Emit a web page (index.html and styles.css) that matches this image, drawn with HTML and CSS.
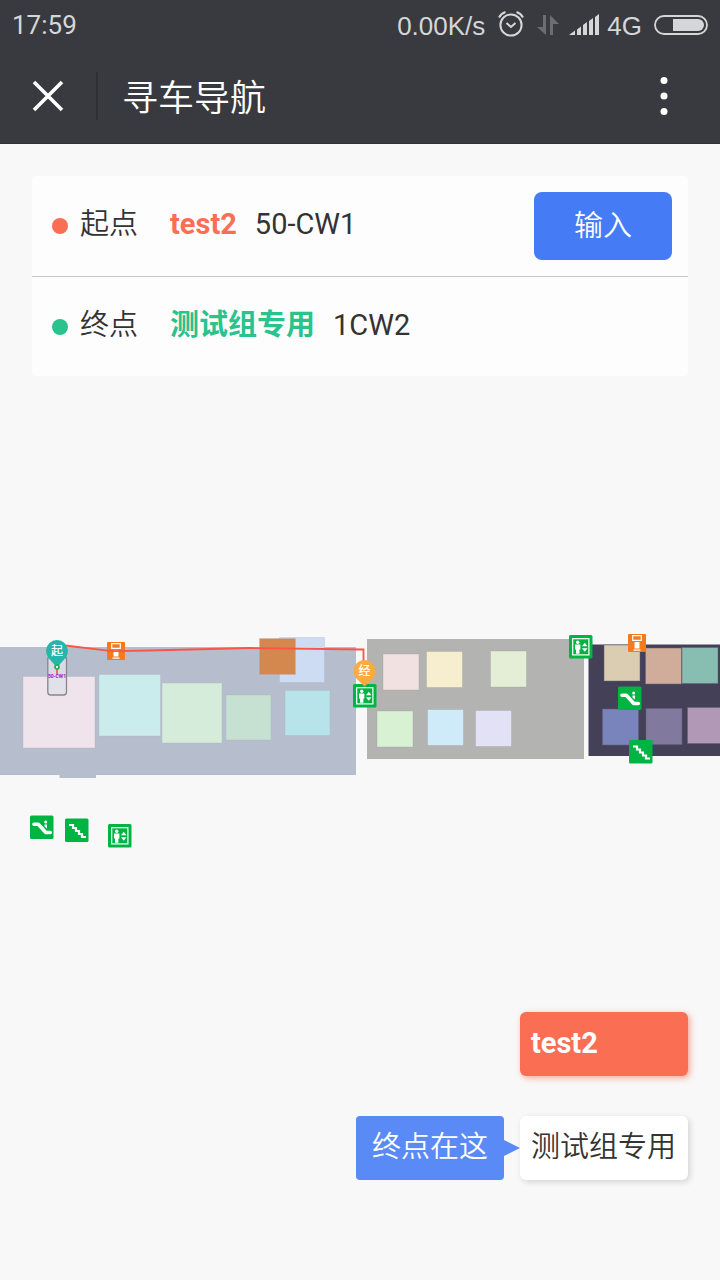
FILE: index.html
```html
<!DOCTYPE html>
<html lang="zh-CN">
<head>
<meta charset="utf-8">
<meta name="viewport" content="width=device-width, initial-scale=1">
<title>寻车导航</title>
<link rel="stylesheet" href="styles.css">
</head>
<body>
<div class="app">
  <header class="header">
    <div class="status">
      <span class="status-time">17:59</span>
      <span class="status-net">0.00K/s</span>
      <svg class="icon-alarm" width="28" height="28" viewBox="0 0 28 28" fill="none" stroke="#d5d6d7" stroke-width="2">
        <circle cx="14" cy="14" r="10.600"/>
        <path d="M9.500 12l4.500 4 4.500-4M2 6.500Q4 2.500 8.500 1M26 6.500Q24 2.500 19.500 1"/>
      </svg>
      <svg class="icon-data" width="22" height="22" viewBox="0 0 22 22" fill="#6c6d71">
        <path d="M6 1h3v20L0 13h6zM13 21h3v-11h6L13 1z"/>
      </svg>
      <svg class="icon-signal" width="30" height="22" viewBox="0 0 30 22" fill="#d5d6d7">
        <path d="M0 21L6 16.500V21zM8 15.500l4-3V21H8zM14 11l4-3v13h-4zM20 7l4-3v17h-4zM26 3l4-3v21h-4z"/>
      </svg>
      <span class="status-cell">4G</span>
      <svg class="icon-battery" width="54" height="20" viewBox="0 0 54 20">
        <rect x="1" y="1" width="52" height="18" rx="9" fill="none" stroke="#d5d6d7" stroke-width="1.800"/>
        <path d="M19 4h25a6 6 0 0 1 0 12H19z" fill="#d5d6d7"/>
      </svg>
    </div>
    <div class="titlebar">
      <button class="icon-button" type="button" aria-label="关闭">
        <svg width="32" height="32" viewBox="0 0 32 32" stroke="#fff" stroke-width="3.600"><path d="M2 2l28 28M30 2L2 30"/></svg>
      </button>
      <h1 class="title">寻车导航</h1>
      <button class="icon-button" type="button" aria-label="更多">
        <svg width="8" height="40" viewBox="0 0 8 40" fill="#fff"><circle cx="4" cy="4.500" r="3.500"/><circle cx="4" cy="20" r="3.500"/><circle cx="4" cy="35.500" r="3.500"/></svg>
      </button>
    </div>
  </header>

  <main class="main">
    <section class="route">
      <div class="route-row">
        <span class="dot dot-start"></span>
        <span class="route-text">
          <span class="route-label">起点</span>
          <strong class="place place-start">test2</strong>
          <span class="spot">50-CW1</span>
        </span>
        <button class="enter" type="button">输入</button>
      </div>
      <div class="route-row">
        <span class="dot dot-end"></span>
        <span class="route-text">
          <span class="route-label">终点</span>
          <strong class="place place-end">测试组专用</strong>
          <span class="spot">1CW2</span>
        </span>
      </div>
    </section>

    <svg class="map" viewBox="0 620 720 240" role="img" aria-label="楼层地图">
      <defs>
        <g id="lift">
          <rect width="23.500" height="23.500" rx="1.500" fill="#00b444"/>
          <rect x="3.700" y="3.700" width="16.200" height="16.200" fill="none" stroke="#fff" stroke-width="1.200"/>
          <circle cx="8.700" cy="7.300" r="1.700" fill="#fff"/>
          <path d="M6 9.500h5.400v5h-1v4.200H7v-4.200H6zM13 11.300h5.500L15.750 7.800zM13 13.300h5.500l-2.750 3.500z" fill="#fff"/>
        </g>
        <g id="escalator">
          <rect width="23.500" height="23.500" rx="1.500" fill="#00b444"/>
          <path d="M4 8.800h4.300l7.500 8.200h4.500" fill="none" stroke="#fff" stroke-width="3.600" stroke-linecap="round" stroke-linejoin="round"/>
          <circle cx="15.700" cy="6.500" r="1.500" fill="#fff"/>
          <path d="M14.500 9h2.500v4l-2.500-2z" fill="#fff"/>
        </g>
        <g id="stairs">
          <rect width="23.500" height="23.500" rx="1.500" fill="#00b444"/>
          <path d="M4 6.500h4v3h3v3h3v3h3v3h4" fill="none" stroke="#fff" stroke-width="2.200"/>
        </g>
        <g id="gate">
          <rect width="18" height="18" rx="1" fill="#f47a1c"/>
          <path d="M4.700 1.700h8.600v4.600H4.700z" fill="none" stroke="#fff" stroke-width="1.200"/>
          <path d="M6.500 8h5v6.500h-5zM5.500 15.500h7v1.200h-7z" fill="#fff"/>
        </g>
      </defs>

      <path d="M-1 647H356V775H96V778H59.500V775H-1z" fill="#b6bdcc"/>
      <g stroke="#b0b5bf" stroke-opacity=".35">
        <rect x="23" y="676.500" width="72" height="71.500" fill="#efe4ec"/>
        <rect x="99" y="674.500" width="61.500" height="61.500" fill="#caecec"/>
        <rect x="162" y="683" width="60" height="60" fill="#d4ecd9"/>
        <rect x="226" y="695" width="45" height="45" fill="#c6e1d1"/>
        <rect x="285" y="690.500" width="45" height="45" fill="#b7e3ea"/>
        <rect x="279.500" y="637.500" width="45" height="45" fill="#cedcf3"/>
        <rect x="259.500" y="638.500" width="36" height="36" fill="#d4884d"/>
      </g>

      <rect x="367" y="639" width="217" height="120" fill="#b3b3b1"/>
      <g stroke="#999" stroke-opacity=".3">
        <rect x="383" y="654" width="36" height="36" fill="#f2e1e1"/>
        <rect x="426.500" y="651.500" width="36" height="36" fill="#f7eecf"/>
        <rect x="490.500" y="651" width="36" height="36" fill="#e4edd6"/>
        <rect x="377" y="711" width="36" height="36" fill="#d8f1d3"/>
        <rect x="427.500" y="709.500" width="36" height="36" fill="#cfeaf9"/>
        <rect x="475.500" y="710.500" width="36" height="36" fill="#e3e1f6"/>
      </g>

      <rect x="588.500" y="644.500" width="140" height="111.500" fill="#434058"/>
      <g stroke="#655f72" stroke-opacity=".5">
        <rect x="604" y="645" width="36" height="36" fill="#dbcdb2"/>
        <rect x="645.500" y="648" width="36" height="36" fill="#d0ad9b"/>
        <rect x="682" y="647.500" width="36" height="36" fill="#88bdb2"/>
        <rect x="602.500" y="709" width="36" height="36" fill="#7983bc"/>
        <rect x="646" y="708.500" width="36" height="36" fill="#82799f"/>
        <rect x="687.500" y="707.500" width="36" height="36" fill="#b098b6"/>
      </g>

      <use href="#gate" x="107" y="642"/>
      <use href="#gate" x="628" y="634"/>
      <path d="M65 645.500L112 651.200 150 650.500 250 648 363.500 649.500V662" fill="none" stroke="#fb5448" stroke-width="1.800"/>

      <rect x="47.800" y="656" width="18.700" height="39" rx="3" fill="#dde1e9" fill-opacity=".85" stroke="#8c8489" stroke-width="1.300"/>
      <path d="M57 668v7" stroke="#f35d4e" stroke-width="1.800"/>
      <path d="M57 667.500L48.500 658A11 11 0 1 1 65.500 658z" fill="#25b5aa"/>
      <circle cx="57" cy="667" r="2" fill="#fff" stroke="#17ad46" stroke-width="1.600"/>
      <text class="pin-text" x="57" y="655">起</text>
      <text class="spot-text" x="57" y="678">50-CW1</text>

      <use href="#lift" x="353" y="684"/>
      <use href="#lift" x="569" y="635"/>
      <use href="#lift" x="108" y="824"/>
      <use href="#escalator" x="30" y="815.500"/>
      <use href="#escalator" x="618" y="686.500"/>
      <use href="#stairs" x="65" y="818.500"/>
      <use href="#stairs" x="629" y="740"/>

      <path d="M364.500 686.500L356 678A11 11 0 1 1 373 678z" fill="#ffaa3c"/>
      <text class="pin-text" x="364.500" y="675">经</text>
    </svg>

    <nav class="floors" aria-label="楼层">
      <button class="floor floor-active" type="button">test2</button>
      <div class="floor-line">
        <span class="hint">终点在这</span>
        <button class="floor floor-cjk" type="button">测试组专用</button>
      </div>
    </nav>
  </main>
</div>
</body>
</html>
```

FILE: styles.css
```css
* {
  box-sizing: border-box;
}

body {
  margin: 0;
  background: #f8f8f8;
  color: #333;
  font-family: Roboto, "Noto Sans CJK SC", sans-serif;
  font-size: 29px;
  line-height: 40px;
}

button {
  margin: 0;
  padding: 0;
  border: 0;
  background: none;
  color: inherit;
  font: inherit;
  cursor: pointer;
}

svg {
  display: block;
  flex: none;
}

.app {
  display: flex;
  flex-direction: column;
  min-height: 100vh;
}

.header {
  background: #393a3f;
  border-bottom: 1px solid #323338;
  color: #fff;
}

.status {
  display: flex;
  align-items: center;
  height: 48px;
  padding: 2px 12px 0;
  color: #d5d6d7;
  font-size: 26px;
}

.status-time {
  margin-right: auto;
}

.status-net,
.status-cell {
  font-family: "Liberation Sans", sans-serif;
  padding-top: 2px;
}

.icon-alarm,
.icon-data {
  margin-left: 12px;
}

.icon-signal {
  margin-left: 10px;
}

.status-cell {
  margin-left: 8px;
}

.icon-battery {
  margin-left: 12px;
}

.titlebar {
  display: flex;
  align-items: center;
  height: 95px;
  padding: 1px 16px 0 0;
}

.icon-button {
  display: flex;
  flex: none;
  align-items: center;
  justify-content: center;
  width: 80px;
  height: 80px;
}

.icon-button:first-child {
  width: 96px;
}

.title {
  flex: 1;
  margin: 0;
  padding: 6px 0 0 24px;
  border-left: 2px solid #2e2f33;
  font-size: 36px;
  font-weight: 350;
  line-height: 42px;
}

.main {
  display: flex;
  flex: 1;
  flex-direction: column;
  padding-top: 32px;
}

.route {
  margin: 0 32px;
  border-radius: 4px;
  background: #fdfdfd;
}

.route-row {
  display: flex;
  align-items: center;
  height: 100px;
  padding: 0 16px 0 20px;
}

.route-row + .route-row {
  border-top: 1px solid #c8c8c8;
}

.dot {
  width: 16px;
  height: 16px;
  margin-right: 12px;
  border-radius: 50%;
}

.dot-start {
  background: #fa6e54;
}

.dot-end {
  background: #2ac28d;
}

.route-text {
  display: flex;
  align-items: baseline;
  padding-bottom: 4px;
}

.route-label {
  margin-right: 32px;
  font-weight: 350;
}

.place {
  margin-right: 18px;
  font-weight: 700;
}

.place-start {
  color: #fa6e54;
}

.place-end {
  color: #2ac28d;
}

.enter {
  width: 138px;
  height: 68px;
  margin-left: auto;
  border-radius: 8px;
  background: #457cf6;
  color: #fff;
  font-weight: 350;
}

.map {
  width: 100%;
  margin-top: 244px;
}

.pin-text {
  fill: #fff;
  font-size: 12px;
  font-weight: 500;
  text-anchor: middle;
}

.spot-text {
  fill: #a814cf;
  font-size: 5px;
  font-weight: 700;
  text-anchor: middle;
}

.floors {
  display: flex;
  flex-direction: column;
  align-items: flex-end;
  gap: 40px;
  margin-top: auto;
  padding: 32px 32px 100px;
}

.floor-line {
  display: flex;
  gap: 16px;
}

.floor {
  width: 168px;
  height: 64px;
  padding: 0 11px 2px;
  border-radius: 6px;
  background: #fff;
  box-shadow: 2px 2px 6px rgba(0, 0, 0, 0.15);
  text-align: left;
}

.floor-cjk {
  font-weight: 350;
}

.floor-active {
  background: #fa6e54;
  box-shadow: 2px 2px 6px rgba(250, 110, 84, 0.6);
  color: #fff;
  font-weight: 700;
}

.hint {
  position: relative;
  padding: 11px 16px 13px;
  border-radius: 4px;
  background: #5a8af6;
  color: #fff;
  font-weight: 350;
}

.hint::after {
  content: "";
  position: absolute;
  top: 50%;
  left: 100%;
  border: 8px solid transparent;
  border-right-width: 0;
  border-left: 16px solid #5a8af6;
  transform: translateY(-50%);
}
```
